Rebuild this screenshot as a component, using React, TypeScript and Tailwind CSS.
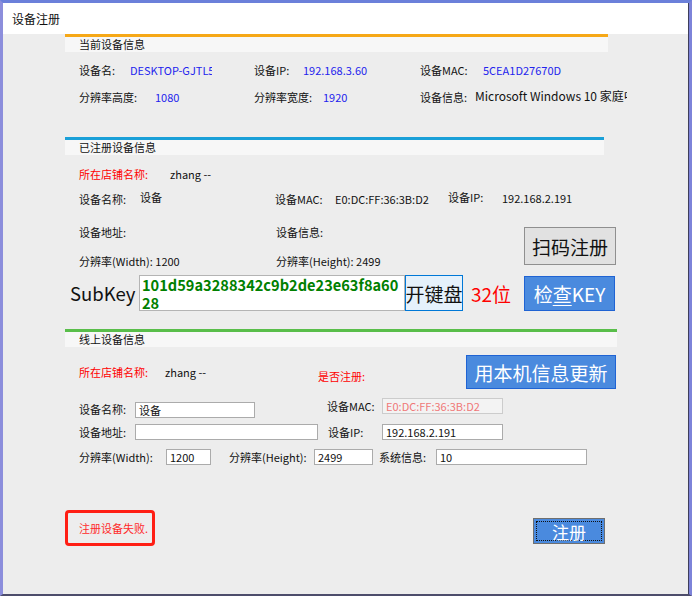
import type { ReactNode } from "react";

function SectionHead({ bar, width, title }: { bar: string; width: string; title: string }) {
  return (
    <div className={`ml-[62px] shrink-0 ${width}`}>
      <div className={`h-[3px] ${bar}`} />
      <div className="h-[15px] bg-[#f7f7f7] pl-[14px] flex items-center leading-none">{title}</div>
    </div>
  );
}

function Box({ className, children, muted }: { className: string; children?: ReactNode; muted?: boolean }) {
  return (
    <div
      className={`shrink-0 h-[16px] border flex items-center px-[3px] overflow-hidden whitespace-nowrap leading-none ${
        muted ? "bg-[#f3f3f3] border-[#cccccc] text-[#f07878]" : "bg-white border-[#ababab]"
      } ${className}`}
    >
      {children}
    </div>
  );
}

export default function App() {
  return (
    <div className="w-[692px] h-[596px] overflow-hidden border-l-[3px] border-t-[3px] border-r-[3px] border-b-[2px] border-l-[#8c8edc] border-t-[#6b80da] border-r-[#7d83d9] border-b-[#4d4d6b] font-['Noto_Sans_CJK_SC',sans-serif] text-[11px] text-[#111]">
      <div className="h-full flex flex-col bg-[#ededed] border-r border-r-[#3e3e5c]">
        <div className="h-[31px] shrink-0 bg-white flex items-center pl-[9px] text-[12px]">设备注册</div>

        {/* 当前设备信息 */}
        <SectionHead bar="bg-[#f6a817]" width="w-[543px]" title="当前设备信息" />
        <div className="mt-[8px] h-[20px] shrink-0 pl-[76px] flex items-center whitespace-nowrap">
          <span className="w-[51px] shrink-0">设备名:</span>
          <span className="w-[124px] shrink-0">
            <span className="block w-[82px] overflow-hidden text-[#2323ee]">DESKTOP-GJTL5</span>
          </span>
          <span className="w-[49px] shrink-0">设备IP:</span>
          <span className="w-[117px] shrink-0 text-[#2323ee]">192.168.3.60</span>
          <span className="w-[63px] shrink-0">设备MAC:</span>
          <span className="text-[#2323ee]">5CEA1D27670D</span>
        </div>
        <div className="mt-[7px] h-[20px] shrink-0 pl-[76px] flex items-center whitespace-nowrap">
          <span className="w-[76px] shrink-0">分辨率高度:</span>
          <span className="w-[99px] shrink-0 text-[#2323ee]">1080</span>
          <span className="w-[69px] shrink-0">分辨率宽度:</span>
          <span className="w-[97px] shrink-0 text-[#2323ee]">1920</span>
          <span className="w-[55px] shrink-0">设备信息:</span>
          <span className="w-[152px] shrink-0 overflow-hidden text-[12px] -mt-[3px]">Microsoft Windows 10 家庭中</span>
        </div>

        {/* 已注册设备信息 */}
        <div className="mt-[30px]" />
        <SectionHead bar="bg-[#1aa0d8]" width="w-[539px]" title="已注册设备信息" />
        <div className="mt-[9px] h-[20px] shrink-0 pl-[76px] flex items-center whitespace-nowrap">
          <span className="w-[91px] shrink-0 text-[#ff0000]">所在店铺名称:</span>
          <span>zhang --</span>
        </div>
        <div className="mt-[5px] h-[20px] shrink-0 pl-[76px] flex items-center whitespace-nowrap">
          <span className="w-[61px] shrink-0">设备名称:</span>
          <span className="w-[135px] shrink-0 -mt-[4px]">设备</span>
          <span className="w-[60px] shrink-0">设备MAC:</span>
          <span className="w-[113px] shrink-0">E0:DC:FF:36:3B:D2</span>
          <span className="w-[54px] shrink-0 -mt-[3px]">设备IP:</span>
          <span className="-mt-[2px]">192.168.2.191</span>
        </div>
        <div className="mt-[13px] shrink-0 pl-[76px] flex items-start whitespace-nowrap">
          <div className="w-[445px] shrink-0 flex flex-col">
            <div className="h-[20px] flex items-center">
              <span className="w-[197px] shrink-0">设备地址:</span>
              <span>设备信息:</span>
            </div>
            <div className="mt-[9px] h-[20px] flex items-center">
              <span className="w-[197px] shrink-0">分辨率(Width): 1200</span>
              <span>分辨率(Height): 2499</span>
            </div>
          </div>
          <button className="mt-[5px] w-[92px] h-[38px] shrink-0 bg-[#e1e1e1] border border-[#8f8f8f] text-[19px] leading-none flex items-center justify-center">
            扫码注册
          </button>
        </div>
        <div className="mt-[4px] h-[36px] shrink-0 pl-[67px] flex items-center whitespace-nowrap">
          <span className="w-[69px] shrink-0 text-[18.5px] leading-none">SubKey</span>
          <div className="w-[266px] h-[36px] shrink-0 overflow-hidden bg-white border border-[#b4b4b4] pl-[2px] text-[14.6px] font-bold text-[#008000] leading-[17.5px]">
            <div>101d59a3288342c9b2de23e63f8a60</div>
            <div>28</div>
          </div>
          <button className="w-[58px] h-[36px] shrink-0 bg-[#e5f1fb] border border-[#0078d7] text-[19px] leading-none flex items-center justify-center">
            开键盘
          </button>
          <span className="ml-[8px] w-[53px] shrink-0 text-[19px] leading-none text-[#ff0000]">32位</span>
          <button className="w-[91px] h-[35px] shrink-0 bg-[#4a8ade] border border-[#1f63d3] text-white text-[19px] leading-none flex items-center justify-center">
            检<span className="underline underline-offset-[3px]">查</span>KEY
          </button>
        </div>

        {/* 线上设备信息 */}
        <div className="mt-[18px]" />
        <SectionHead bar="bg-[#59be4a]" width="w-[552px]" title="线上设备信息" />
        <div className="mt-[8px] h-[34px] shrink-0 pl-[76px] flex items-start whitespace-nowrap leading-[14px]">
          <span className="mt-[10px] w-[86px] shrink-0 text-[#ff0000]">所在店铺名称:</span>
          <span className="mt-[10px] w-[153px] shrink-0">zhang --</span>
          <span className="mt-[14px] w-[148px] shrink-0 text-[#ff0000]">是否注册:</span>
          <button className="w-[150px] h-[34px] shrink-0 bg-[#4a8ade] border border-[#1f63d3] text-white text-[19px] leading-none flex items-center justify-center">
            用本机信息更新
          </button>
        </div>
        <div className="mt-[9px] shrink-0 pl-[76px] flex items-start whitespace-nowrap leading-[14px]">
          <span className="mt-[4px] w-[56px] shrink-0">设备名称:</span>
          <Box className="mt-[4px] w-[120px]">设备</Box>
          <span className="ml-[72px] mt-[1px] w-[55px] shrink-0">设备MAC:</span>
          <Box className="w-[121px]" muted>
            E0:DC:FF:36:3B:D2
          </Box>
        </div>
        <div className="mt-[6px] h-[16px] shrink-0 pl-[76px] flex items-center whitespace-nowrap">
          <span className="w-[56px] shrink-0">设备地址:</span>
          <Box className="w-[183px]" />
          <span className="ml-[10px] w-[54px] shrink-0">设备IP:</span>
          <Box className="w-[121px]">192.168.2.191</Box>
        </div>
        <div className="mt-[9px] h-[16px] shrink-0 pl-[76px] flex items-center whitespace-nowrap">
          <span className="w-[87px] shrink-0">分辨率(Width):</span>
          <Box className="w-[45px]">1200</Box>
          <span className="ml-[18px] w-[85px] shrink-0">分辨率(Height):</span>
          <Box className="w-[59px]">2499</Box>
          <span className="ml-[6px] w-[57px] shrink-0">系统信息:</span>
          <Box className="w-[151px]">10</Box>
        </div>

        <div className="mt-[45px] shrink-0 pl-[62px] flex items-start whitespace-nowrap">
          <div className="w-[90px] h-[36px] shrink-0 border-[3px] border-[#ff1e14] rounded-[4px] pl-[11px] flex items-center text-[#ff2a2a]">
            注册设备失败.
          </div>
          <button className="ml-[378px] mt-[8px] w-[72px] h-[26px] shrink-0 bg-[#4a8ade] border border-[#6f6f6f] p-[2px]">
            <span className="w-full h-full border border-dotted border-[#111] flex items-center justify-center text-white text-[17px] leading-none">
              注册
            </span>
          </button>
        </div>
      </div>
    </div>
  );
}
